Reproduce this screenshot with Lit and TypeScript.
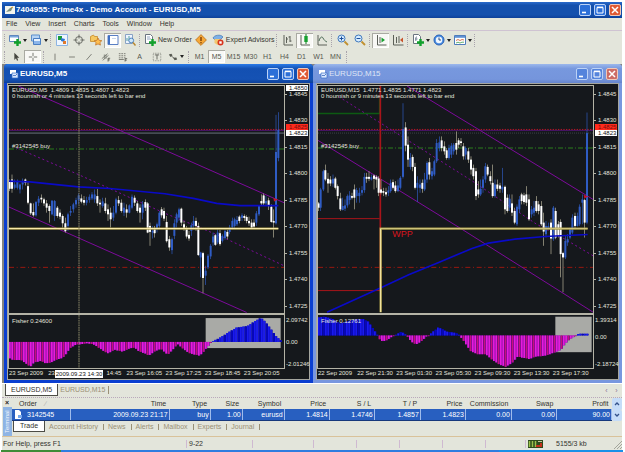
import { LitElement, html, css, svg, nothing } from "lit";
import { customElement, property } from "lit/decorators.js";
import { classMap } from "lit/directives/class-map.js";
import { styleMap } from "lit/directives/style-map.js";

type Pt = [number, number];

interface Line {
  points: string;
  kind: string;
}

interface ChartData {
  symbol: string;
  quote: string;
  countdown: string;
  order: string;
  left: number;
  candles: string;
  under: Line[];
  over: Line[];
  marker: Pt;
  highlight: [number, number, number, number];
  zero: number;
  fisher: string;
  fisherLabel: string;
  scale: [string, string, string];
  scaleGap: [number, number];
  times: string[];
  cursor?: { x: number; label: string };
  note?: string;
  topBadge?: string;
}

const PRICES = ["1.4845", "1.4830", "1.4815", "1.4800", "1.4785", "1.4770", "1.4755", "1.4740", "1.4725"];

/* Each candle: x, high, body top, body bottom, low, w(hite) or b(lue). */
const M5: ChartData = {
  symbol: "EURUSD,M5",
  quote: "EURUSD,M5  1.4809 1.4835 1.4807 1.4823",
  countdown: "0 hournish or 4 minutes 13 seconds left to bar end",
  order: "#3142545 buy",
  left: 27,
  candles: `29 300 305 328 335 w;36 285 300 328 340 w;44 300 315 325 330 b;52 300 305 325 330 b;60 312 315 330 342 b;68 297 305 315 330 b;
76 297 300 310 318 w;84 305 320 370 375 w;92 370 372 402 407 w;100 372 398 408 412 w;108 365 368 408 412 b;116 350 358 370 380 b;
124 345 355 360 370 w;132 355 360 372 380 w;140 362 372 385 400 w;148 375 380 395 430 w;156 362 364 405 408 b;164 362 365 410 425 b;
172 380 385 410 415 w;180 390 400 412 420 w;188 405 410 432 445 w;196 415 432 456 460 w;204 400 405 440 455 b;212 380 395 400 410 b;
220 370 375 390 400 b;228 355 362 375 385 b;236 342 348 362 375 b;244 345 357 367 372 w;252 350 362 370 378 w;260 352 362 370 378 b;
268 345 352 362 370 b;276 338 345 357 362 b;284 330 345 360 370 b;292 328 350 372 380 w;300 360 370 375 400 w;308 355 366 380 385 b;
316 355 372 395 402 w;324 375 390 405 425 w;332 385 400 420 445 w;340 380 400 415 425 b;348 355 360 400 405 b;356 350 362 372 380 w;
364 360 370 395 400 w;372 370 385 400 410 b;380 375 390 400 415 w;388 375 378 400 402 b;396 345 352 385 390 b;404 348 355 370 380 w;
412 365 372 395 400 w;420 375 385 400 430 w;428 365 375 400 420 b;436 360 368 385 395 w;443 368 372 460 462 w;450 430 440 458 500 w;
458 440 455 460 478 b;464 440 448 462 475 w;471 430 435 450 460 b;478 395 400 440 450 b;485 383 390 408 415 w;492 385 395 418 425 w;
500 410 428 486 490 w;508 470 480 505 515 w;516 475 480 513 525 b;523 420 432 470 480 b;530 400 405 430 445 b;537 385 390 415 425 b;
544 385 388 430 440 w;552 425 435 448 455 w;560 440 448 472 478 w;567 455 467 478 485 w;574 430 438 455 470 b;581 410 425 440 450 b;
588 415 425 440 455 w;595 430 440 528 530 w;602 518 520 535 595 b;609 518 522 597 643 w;617 560 575 590 618 b;624 525 530 565 570 b;
632 495 500 532 540 b;639 460 472 490 500 b;646 465 468 497 500 w;653 450 460 490 495 b;660 452 462 495 500 w;667 465 470 485 490 b;
675 450 455 477 482 b;682 452 458 472 480 w;689 437 445 458 465 b;697 415 425 445 450 b;704 415 420 440 447 b;711 410 422 435 440 b;
718 408 412 425 432 w;726 402 408 416 425 b;733 405 410 416 425 w;740 408 413 425 432 w;747 412 425 432 440 w;755 420 430 445 447 w;
762 420 430 442 447 w;769 395 402 430 440 b;777 378 380 405 410 b;784 345 365 372 378 w;791 342 348 372 378 w;798 350 365 372 380 b;
806 355 363 378 392 w;814 375 382 428 430 w;821 390 425 430 475 w;828 105 217 432 436 b;835 97 150 235 245 b`,
  under: [
    { points: "27,149 852,149", kind: "ask" },
    { points: "27,152 852,152", kind: "violet" },
    { points: "27,160 852,160", kind: "bid" },
    { points: "27,208 852,208", kind: "buy" },
    { points: "27,565 852,565", kind: "stop" },
    { points: "55,18 480,205 852,370", kind: "trend" },
    { points: "27,383 170,447 480,585 740,701", kind: "trend" },
    { points: "50,205 235,285 495,402 600,445 670,475 852,560", kind: "trend dotted" },
  ],
  over: [
    { points: "27,305 90,307 235,322 330,327 495,343 580,357 650,372 720,379 835,379", kind: "average" },
    { points: "27,448 835,448", kind: "pivot" },
    { points: "27,448 835,448", kind: "pivot-core" },
  ],
  marker: [827, 360],
  highlight: [617, 282, 225, 88],
  zero: 352,
  fisher: `28 400;36 405;60 405;75 415;88 425;100 412;120 408;135 415;150 412;165 405;180 400;190 395;200 380;210 368;225 360;260 356;280 360;
295 370;310 380;322 385;340 375;365 380;385 372;400 368;415 380;430 385;445 392;460 380;480 372;500 390;515 375;530 358;550 375;565 385;
595 392;605 385;615 372;625 360;632 352;640 347;660 338;680 325;705 310;740 305;760 292;780 281;795 295;810 315;825 335;840 348`,
  fisherLabel: "Fisher 0.24600",
  scale: ["2.09742", "0.00", "-2.01246"],
  scaleGap: [1, 1],
  times: ["23 Sep 2009", "23", "14:45", "23 Sep 16:05", "23 Sep 17:25", "23 Sep 18:45", "23 Sep 20:05"],
  cursor: { x: 237, label: "2009.09.23 14:30" },
  topBadge: "1.4850",
};

const M15: ChartData = {
  symbol: "EURUSD,M15",
  quote: "EURUSD,M15  1.4771 1.4835 1.4771 1.4823",
  countdown: "0 hournish or 9 minutes 13 seconds left to bar end",
  order: "#3142545 buy",
  left: 18,
  candles: `20 368 372 385 395 w;26 325 330 385 395 b;34 270 275 330 335 b;40 255 272 300 305 w;48 280 298 312 340 w;55 290 300 312 320 w;
63 285 298 312 322 b;70 292 297 325 330 w;77 315 320 350 360 w;85 340 357 390 395 w;92 355 380 392 393 b;99 360 378 388 395 b;
106 345 350 378 385 b;113 335 348 362 375 b;120 340 350 355 360 w;127 315 330 355 390 w;134 325 332 350 370 b;142 325 340 350 370 b;
150 320 332 340 348 b;157 280 292 332 340 b;164 280 292 298 310 w;171 275 292 298 305 w;178 285 293 300 303 b;186 285 288 298 330 w;
193 287 292 300 325 w;200 290 297 340 350 w;207 300 330 340 345 w;214 325 335 340 350 w;222 325 338 345 352 w;229 320 333 340 350 b;
236 300 310 335 340 b;243 300 308 325 330 w;250 305 318 335 340 w;258 300 318 335 338 b;265 290 295 325 330 b;273 70 148 292 297 b;
281 127 143 198 215 w;288 170 195 240 262 w;295 220 235 262 270 b;302 225 232 262 275 w;309 250 262 325 330 w;316 290 310 325 368 b;
324 300 315 325 340 b;331 300 310 328 340 w;338 280 300 330 335 b;345 245 250 300 310 b;352 235 248 285 300 w;360 265 275 290 300 b;
367 240 245 285 290 b;374 178 190 245 250 b;382 170 188 205 215 b;389 170 182 205 215 w;397 185 200 215 225 w;404 205 212 235 240 w;
411 195 205 235 240 b;418 190 198 225 235 b;425 190 195 215 225 b;433 155 190 210 225 w;440 175 182 195 205 w;447 175 185 190 200 w;
454 190 200 230 240 w;461 200 205 225 240 b;469 205 215 240 250 w;477 230 240 270 285 w;484 255 265 290 300 w;492 265 275 350 362 w;
499 305 330 345 355 w;506 300 328 345 350 b;513 290 300 325 340 b;520 250 260 300 310 b;527 255 262 285 290 w;535 275 290 305 315 w;
542 255 310 350 355 w;549 300 315 350 355 b;556 300 315 328 335 w;564 310 318 328 340 w;571 265 322 330 340 b;579 318 322 390 405 w;
586 345 355 395 400 w;593 345 358 385 395 b;600 345 372 400 410 w;608 385 395 430 435 w;615 375 382 435 440 b;622 350 360 390 400 b;
629 340 345 365 375 w;636 340 348 368 375 w;643 320 345 370 380 w;651 345 360 420 425 w;659 380 390 405 415 b;666 365 385 400 410 b;
673 350 365 395 400 w;680 365 375 395 405 w;688 365 380 435 440 w;695 400 430 457 500 w;702 425 440 465 475 b;709 430 440 446 450 b;
717 420 430 478 525 w;724 380 385 480 485 b;731 385 395 475 480 w;739 425 435 470 475 w;746 420 428 525 595 w;753 518 522 535 640 w;
760 470 485 535 540 b;767 465 480 490 500 b;774 445 450 475 480 b;781 405 415 460 465 b;789 400 410 440 450 w;796 400 410 440 442 b;
803 375 382 435 440 b;811 345 360 370 435 b;818 358 362 430 475 w;825 98 160 430 435 b`,
  under: [
    { points: "18,149 843,149", kind: "ask" },
    { points: "18,152 843,152", kind: "violet" },
    { points: "18,160 843,160", kind: "bid faint" },
    { points: "18,205 843,205", kind: "buy" },
    { points: "18,565 843,565", kind: "stop" },
    { points: "285,18 480,137 843,360", kind: "trend" },
    { points: "18,182 445,447 843,700", kind: "trend" },
    { points: "80,50 480,304 674,435 759,480 843,530", kind: "trend dotted" },
    { points: "18,101 203,101 203,55", kind: "green" },
    { points: "18,418 203,418", kind: "red" },
    { points: "18,635 205,635", kind: "red" },
    { points: "205,18 205,635", kind: "red wide" },
  ],
  over: [
    { points: "45,700 205,627 290,587 380,550 480,508 529,492 609,480 699,472 827,466", kind: "average" },
    { points: "206,700 206,448 827,448", kind: "pivot" },
    { points: "206,448 827,448", kind: "pivot-core dim" },
    { points: "206,700 206,448", kind: "pivot-core" },
  ],
  marker: [822, 351],
  highlight: [730, 278, 109, 104],
  zero: 333,
  fisher: `20 280;35 278;60 285;80 298;100 292;130 285;150 285;165 292;175 305;185 320;193 331;198 343;210 351;225 345;240 335;250 330;265 322;
278 331;285 338;295 352;310 359;325 350;340 336;350 331;360 322;375 310;390 315;400 322;430 326;438 331;445 340;460 360;474 380;494 388;
519 388;534 402;559 418;579 425;599 412;614 395;649 402;669 395;699 392;724 383;744 375;754 360;769 345;784 336;790 331;796 328;830 328`,
  fisherLabel: "Fisher 0.12761",
  scale: ["1.39314", "0.00", "-2.18724"],
  scaleGap: [9, 20],
  times: ["22 Sep 2009", "22 Sep 21:30", "23 Sep 01:30", "23 Sep 05:30", "23 Sep 09:30", "23 Sep 13:30", "23 Sep 17:30"],
  note: "WPP",
};

const parse = (text: string): string[][] => text.split(";").map((row) => row.trim().split(" "));

const UI_FONT = css`"Liberation Sans", Arial, sans-serif`;

const windowIcon = html`<svg class="app-icon" viewBox="0 0 10 10" aria-hidden="true">
  <path d="M1 1h6v4H1z" fill="#fff" /><path d="M3 4h6v5H3z" fill="#dce9ff" stroke="#3b71c4" stroke-width=".7" />
  <path d="M4 7l1-1 1 1 2-2" fill="none" stroke="#2458b0" stroke-width=".7" />
</svg>`;

const captionStyles = css`
  .caption-buttons { display: flex; gap: 3px; }
  .caption-buttons button {
    width: 12px; height: 12px; padding: 0; box-sizing: border-box; display: block;
    border: 1px solid #bcd2f6; border-radius: 2px; background: #2c6fd8;
  }
  .caption-buttons .close { background: #df5a34; border-color: #f0c8b8; }
  .caption-buttons svg { display: block; width: 10px; height: 10px; }
  .app-icon { width: 10px; height: 10px; flex: none; }
`;

const captionButtons = html`<span class="caption-buttons">
  <button aria-label="Minimize"><svg viewBox="0 0 10 10"><path d="M2 7.5h4" stroke="#fff" stroke-width="1.6" /></svg></button>
  <button aria-label="Maximize"><svg viewBox="0 0 10 10"><path d="M2 2.5h6v5.5H2z" fill="none" stroke="#fff" /><path d="M2 2.4h6" stroke="#fff" stroke-width="1.6" /></svg></button>
  <button class="close" aria-label="Close"><svg viewBox="0 0 10 10"><path d="M2 2l6 6M8 2l-6 6" stroke="#fff" stroke-width="1.5" /></svg></button>
</span>`;

@customElement("chart-window")
export class ChartWindow extends LitElement {
  @property({ attribute: false }) data!: ChartData;
  @property({ type: Boolean, reflect: true }) active = false;

  static styles = [
    captionStyles,
    css`
      :host {
        display: flex; flex-direction: column; flex: 1 1 0; min-width: 0; box-sizing: border-box;
        border: solid #7897df; border-width: 0 3px 3px; background: #7897df; border-radius: 4px 4px 0 0;
      }
      :host([active]) { border-color: #0b3fd0; background: #0b3fd0; }
      .title {
        display: flex; align-items: center; gap: 1px; height: 19px; flex: none; margin: 0 -3px; padding: 0 4px 0 5px;
        background: linear-gradient(#9cb8ec, #7798de 25%, #7595dc 80%, #6685cc);
        color: #dfe6f5; font: 8px/12px ${UI_FONT}; border-radius: 4px 4px 0 0;
      }
      :host([active]) .title { background: linear-gradient(#2b7be8, #1350b2 25%, #1552b4 80%, #0c3f9a); color: #fff; font-weight: bold; }
      .title h2 { flex: 1; margin: 0; font: inherit; }
      :host(:not([active])) .caption-buttons button { background: #5584dc; }
      :host(:not([active])) .caption-buttons .close { background: #cc6c66; }
      .body {
        flex: 1; display: grid; min-height: 0; padding-top: 1px; border: 1px solid #a5a69f; background: #15181c; color: #e4e4de;
        grid-template-columns: minmax(0, 1fr) 24px; grid-template-rows: minmax(0, 229fr) minmax(0, 54fr) 10px;
        font: 6px/8px ${UI_FONT};
      }
      .plot { position: relative; border: 1px solid #b4b3a6; border-bottom-width: 2px; min-height: 0; }
      .plot.lower { border-top: 0; border-bottom-width: 1px; }
      .plot svg { position: absolute; inset: 0; width: 100%; height: 100%; }
      .plot p { position: relative; margin: 0; padding-left: 3px; white-space: pre; }
      .plot .order { padding-top: 43px; }
      .plot .head { padding-top: 1px; line-height: 6px; }
      .plot .head + .head { padding-top: 0; }
      .lower p { padding-top: 2px; }
      .plot .note { position: absolute; left: 27%; top: 63%; padding: 0; color: #d8141c; font: 9px/11px ${UI_FONT}; }
      .axis { position: relative; display: flex; flex-direction: column; justify-content: space-between; padding: 5px 0; }
      .axis span { padding-left: 4px; position: relative; white-space: nowrap; }
      .axis .tick::before { content: ""; position: absolute; left: 0; top: 4px; width: 2px; height: 1px; background: #b4b3a6; }
      .axis .badge { position: absolute; left: 1px; width: 19px; padding-left: 3px; height: 6px; line-height: 6px; background: #fff; color: #111; }
      .badge.top { top: 0; }
      .axis .badge.ask { top: 17%; background: #ff2a1c; color: #7a0d0d; }
      .axis .badge.bid { top: 19.5%; }
      .axis.lower { padding: 1px 0; justify-content: flex-start; }
      .lower .space { flex: 1 1 0; padding: 0; }
      .axis.lower span { padding-left: 1px; }
      .times { position: relative; display: grid; grid-template-columns: repeat(7, minmax(0, 39fr)) minmax(0, 3fr); grid-column: 1 / 2; line-height: 9px; }
      .times span { padding-left: 1px; white-space: nowrap; }
      .times .late { text-align: right; padding-right: 4px; }
      .times .badge { position: absolute; left: 17%; top: 1px; width: 48px; padding: 0; height: 8px; line-height: 8px; text-align: center; background: #fff; color: #111; }
      .ask { stroke: #c01822; stroke-dasharray: 4 4; }
      polyline { fill: none; stroke-width: 3; }
      .violet { stroke: #4a1468; }
      .bid { stroke: #69727c; }
      .bid.faint { stroke: #3c4148; stroke-dasharray: 3 3; }
      .buy { stroke: #2a7c1c; stroke-dasharray: 15 6 3 6; }
      .stop { stroke: #98180f; stroke-dasharray: 15 8 3 8; }
      .trend { stroke: #7d0a9c; }
      .dotted { stroke-dasharray: 6 8; }
      .green { stroke: #0d5a12; stroke-width: 5; }
      .red { stroke: #a8141a; }
      .wide { stroke-width: 5; }
      .average { stroke: #0a0ac8; stroke-width: 5; }
      .pivot { stroke: #a89a4a; stroke-width: 7; }
      .pivot-core { stroke: #fff0b0; stroke-width: 3; }
      .pivot-core.dim { stroke: #d2c67c; }
      .cross { stroke: #8c8768; stroke-width: 3; stroke-dasharray: 5 2; }
      .w { fill: #fff; } .b { fill: #2f5cc4; }
      .wick.w { fill: #b9b49c; }
      .mag { fill: #e61bdc; } .mag.alt { fill: #c8107e; } .shade { fill: #6c0c9c; }
      .blue { fill: #1a1aee; } .blue.alt { fill: #0808b8; }
      .highlight { fill: #a9aaa6; }
    `,
  ];

  private candles() {
    return parse(this.data.candles).map(([x, hi, top, bottom, lo, c]) => svg`
      <rect class="wick ${c}" x=${+x - 1} y=${hi} width="2" height=${+lo - +hi}></rect>
      <rect class=${c} x=${+x - 3} y=${top} width="6" height=${Math.max(3, +bottom - +top)}></rect>`);
  }

  private histogram() {
    const { fisher, zero, left } = this.data;
    const points = parse(fisher).map(([x, y]) => [+x, +y] as Pt);
    const last = points[points.length - 1][0];
    const bars = [];
    for (let x = left, i = 0; x < last; x += 7, i++) {
      let k = 0;
      while (k < points.length - 2 && points[k + 1][0] < x) k++;
      const [x0, y0] = points[k];
      const [x1, y1] = points[k + 1];
      const t = Math.max(0, Math.min(1, (x - x0) / (x1 - x0)));
      const y = Math.round(y0 + (y1 - y0) * t);
      const up = y < zero;
      const tone = `${up ? "blue" : "mag"}${i % 3 === 2 ? " alt" : ""}`;
      const top = up ? y : zero;
      const height = Math.max(2, Math.abs(y - zero));
      bars.push(svg`<rect class=${up ? "blue alt" : "shade"} x=${x} y=${top} width="7" height=${height}></rect>
        <rect class=${tone} x=${x} y=${top} width="5" height=${height}></rect>`);
    }
    return bars;
  }

  render() {
    const d = this.data;
    const lines = (list: Line[]) => list.map((l) => svg`<polyline class=${l.kind} points=${l.points}></polyline>`);
    const [hx, hy, hw, hh] = d.highlight;
    const [mx, my] = d.marker;
    return html`
      <header class="title">${windowIcon}<h2>${d.symbol}</h2>${captionButtons}</header>
      <div class="body">
        <div class="plot">
          <svg viewBox="${d.left} 18 825 684" preserveAspectRatio="none" role="img" aria-label="${d.symbol} price">
            ${lines(d.under)} ${this.candles()} ${lines(d.over)}
            <path d="M${mx - 7} ${my - 5}l14 5-12 6z" fill="#c4142c"></path>
            ${d.cursor ? svg`<line class="cross" x1=${d.cursor.x} x2=${d.cursor.x} y1="18" y2="702"></line>` : nothing}
          </svg>
          <p class="head">${d.quote}</p>
          <p class="head">${d.countdown}</p>
          <p class="order">${d.order}</p>
          ${d.note ? html`<p class="note">${d.note}</p>` : nothing}
        </div>
        <div class="axis">
          ${PRICES.map((p) => html`<span class="tick">${p}</span>`)}
          ${d.topBadge ? html`<span class="badge top">${d.topBadge}</span>` : nothing}
          <span class="badge ask">1.4825</span>
          <span class="badge bid">1.4823</span>
        </div>
        <div class="plot lower">
          <svg viewBox="${d.left} 273 825 156" preserveAspectRatio="none" role="img" aria-label="Fisher indicator">
            <rect class="highlight" x=${hx} y=${hy} width=${hw} height=${hh}></rect>
            ${this.histogram()}
            ${d.cursor ? svg`<line class="cross" x1=${d.cursor.x} x2=${d.cursor.x} y1="273" y2="429"></line>` : nothing}
          </svg>
          <p>${d.fisherLabel}</p>
        </div>
        <div class="axis lower">
          <span>${d.scale[0]}</span>
          <span class="space" style=${styleMap({ flexGrow: String(d.scaleGap[0]) })}></span>
          <span>${d.scale[1]}</span>
          <span class="space" style=${styleMap({ flexGrow: String(d.scaleGap[1]) })}></span>
          <span>${d.scale[2]}</span>
        </div>
        <div class="times">
          ${d.times.map((t) => html`<span class=${t.length === 5 ? "late" : ""}>${t}</span>`)}
          ${d.cursor ? html`<span class="badge">${d.cursor.label}</span>` : nothing}
        </div>
      </div>`;
  }
}

const plus = svg`<path d="M8.5 5v7M5 8.5h7" stroke="#12a02c" stroke-width="2.4" />`;

const ICONS: Record<string, unknown> = {
  newChart: svg`<path d="M.5 1.5h9v6h-9z" fill="#fff" stroke="#5f86bd" /><path d="M1 2h8v1.500H1z" fill="#79a6dc" />${plus}`,
  profiles: svg`<path d="M1.500 1h8v6h-8z" fill="#b7d4f4" stroke="#5d8fcb" /><path d="M3.500 4.500h7v6h-7z" fill="#8cb6ea" stroke="#4b7fc2" /><path d="M4 5h6v2H4z" fill="#e8f3ff" />`,
  market: svg`<path d="M.5.5h11v11H.5z" fill="#eef5ff" stroke="#8db4e2" /><path d="M2 2h4v4H2z" fill="#1c9b3a" /><path d="M5 4l4 1-1 3-3-1z" fill="#2f77d0" /><path d="M7 7h3v3H7z" fill="#e07a2c" />`,
  data: svg`<circle cx="6" cy="6" r="3.500" fill="none" stroke="#6a6c66" /><path d="M6 .5v4M6 7.500v4M.5 6h4M7.500 6h4" stroke="#6a6c66" />`,
  navigator: svg`<path d="M.5 2.500l3-1.500 1 1.500h3v5h-7z" fill="#f5c860" stroke="#c68a28" stroke-width=".8" /><path d="M8 4l1.200 2.400 2.600.3-1.900 1.800.5 2.600L8 9.900l-2.400 1.200.5-2.600-1.900-1.800 2.600-.3z" fill="#ffbe50" stroke="#c2762a" stroke-width=".8" />`,
  terminal: svg`<path d="M1 1.500h10v9H1z" fill="#fff" stroke="#5a7fc4" /><path d="M1 2h2v8H1z" fill="#3d6fc4" /><path d="M5 4.500h4" stroke="#c9d6ea" />`,
  tester: svg`<path d="M1.500.5h7v9h-7z" fill="#eef4ff" stroke="#89a3c4" /><path d="M3 7V4M5 7V2M7 7V5" stroke="#56a2a0" /><circle cx="7.200" cy="6.500" r="2.400" fill="#cfe7fa" stroke="#4f82bc" /><path d="M9 8.500l2.500 3" stroke="#b8862c" stroke-width="1.400" />`,
  order: svg`<path d="M1.500.5h5l2 2v7h-7z" fill="#fff" stroke="#6b7480" /><path d="M3 3h3M3 5h4" stroke="#7c93b4" stroke-width=".8" />${plus}`,
  warning: svg`<path d="M6 .6l5.400 5.400L6 11.400.6 6z" fill="#f6a838" stroke="#b8701c" stroke-width=".8" /><path d="M6 3v4" stroke="#7a3c08" stroke-width="1.400" /><circle cx="6" cy="8.700" r=".8" fill="#7a3c08" />`,
  expert: svg`<path d="M1 4c1-3 8-4 10-1L8 6H3z" fill="#7db0e6" stroke="#3e74b4" stroke-width=".7" /><path d="M2.500 5h6v4l-3 2-3-2z" fill="#f2c870" /><circle cx="8.500" cy="8.500" r="3" fill="#d8341c" /><path d="M7.300 7.300h2.400v2.400H7.300z" fill="#fff" />`,
  bars: svg`<path d="M2 1v10h9M4.500 3v6M4.500 5H6M8 2v6M8 3H6.500M8 7h1.500" fill="none" stroke="#5c6058" />`,
  candles: svg`<path d="M2 1v10h9" fill="none" stroke="#5c6058" /><path d="M7 0v10" stroke="#0c7c1c" /><path d="M5.300 2h3.400v6H5.300z" fill="#18a030" />`,
  lineChart: svg`<path d="M2 1v10h9" fill="none" stroke="#5c6058" /><path d="M3 7c1-4 3-5 4-3s2 3 4 4" fill="none" stroke="#4d6b56" />`,
  zoomIn: svg`<circle cx="4.500" cy="4.500" r="3.500" fill="#d6ecff" stroke="#3f78bc" /><path d="M2.500 4.500h4M4.500 2.500v4" stroke="#1c4f9c" /><path d="M7.500 7.500l3.500 3.500" stroke="#c09030" stroke-width="1.800" />`,
  zoomOut: svg`<circle cx="4.500" cy="4.500" r="3.500" fill="#d6ecff" stroke="#3f78bc" /><path d="M2.500 4.500h4" stroke="#1c4f9c" /><path d="M7.500 7.500l3.500 3.500" stroke="#c09030" stroke-width="1.800" />`,
  scroll: svg`<path d="M2.500 1v10h9M5 3v6" fill="none" stroke="#5c6058" /><path d="M6.500 3.500L10 6 6.500 8.500z" fill="#18a030" />`,
  shift: svg`<path d="M1.500 1v10h10M4.500 3v6M7 2v7" fill="none" stroke="#5c6058" /><path d="M11 3.500L8 6l3 2.500z" fill="#c8542c" />`,
  indicators: svg`<path d="M1.500.5h5l2 2v7h-7z" fill="#fff" stroke="#6b7480" /><path d="M5 3c-1.500-.5-1 1-1.200 4M3 5h2.500" fill="none" stroke="#53657c" stroke-width=".8" />${plus}`,
  periods: svg`<circle cx="6" cy="6" r="5" fill="#4c8fe4" stroke="#2760b4" /><circle cx="6" cy="6" r="3.200" fill="#eef6ff" /><path d="M6 3.500V6h2" fill="none" stroke="#2c4c7c" />`,
  templates: svg`<path d="M.5 1.500h11v9H.5z" fill="#fff" stroke="#4f7cba" /><path d="M1 2h10v1.800H1z" fill="#5e90d4" /><path d="M2 6.500l2-1 2 1 2-1 2 .5" fill="none" stroke="#c8502c" stroke-width=".8" /><path d="M2 9l2-.8 2 .8 2-.8h2" fill="none" stroke="#3d9a50" stroke-width=".8" />`,
  cursor: svg`<path d="M4 1v8.500l2-2 1.200 3 1.400-.6L7.400 7H10z" fill="#45463f" />`,
  crosshair: svg`<path d="M6 1v4M6 7v4M1 6h4M7 6h4" stroke="#5c5e58" />`,
  vertical: svg`<path d="M6 2v8" stroke="#6c6e66" />`,
  horizontal: svg`<path d="M2.500 6h7" stroke="#6c6e66" />`,
  trend: svg`<path d="M3 9.500l6-7" stroke="#6c6e66" />`,
  channel: svg`<path d="M1 8l7-6M2 10l7-6M4 3v5M6 3v5" stroke="#6c6e66" stroke-width=".9" /><path d="M8.500 11.500v-4H11M8.500 9.500h2" fill="none" stroke="#44463f" stroke-width=".9" />`,
  fibo: svg`<path d="M1 2h9M1 4.500h9M1 7h9" stroke="#6c6e66" stroke-dasharray="2 1" /><path d="M1 9h6" stroke="#6c6e66" /><path d="M8.500 11.500V8H11M8.500 9.800h2" fill="none" stroke="#44463f" stroke-width=".9" />`,
  label: svg`<path d="M1.500 1.500h9v9h-9z" fill="none" stroke="#7c7e76" stroke-dasharray="1 1" /><path d="M3.500 3.500h5M6 3.500v5.500" stroke="#55574f" />`,
  arrows: svg`<path d="M1 3l3-1 1.500 2L3 6zM6 7l2 3 3-1-1-2.500z" fill="#55574f" /><path d="M4 5l3 2" stroke="#55574f" />`,
};

const icon = (name: string) => svg`<svg class="icon" viewBox="0 0 12 12" aria-hidden="true">${ICONS[name]}</svg>`;

interface Tool { id: string; name: string; text?: string; menu?: boolean; on?: boolean; }
const t = (id: string, name: string, extra: Partial<Tool> = {}): Tool => ({ id, name, ...extra });

const MAIN_TOOLS: Tool[][] = [
  [t("newChart", "New chart", { menu: true }), t("profiles", "Profiles", { menu: true })],
  [t("market", "Market watch"), t("data", "Data window"), t("navigator", "Navigator"), t("terminal", "Terminal", { on: true }), t("tester", "Strategy tester")],
  [t("order", "New Order", { text: "New Order" }), t("warning", "MetaEditor"), t("expert", "Expert Advisors", { text: "Expert Advisors" })],
  [t("bars", "Bar chart"), t("candles", "Candlesticks", { on: true }), t("lineChart", "Line chart")],
  [t("zoomIn", "Zoom in"), t("zoomOut", "Zoom out")],
  [t("scroll", "Auto scroll", { on: true }), t("shift", "Chart shift")],
  [t("indicators", "Indicators", { menu: true }), t("periods", "Periods", { menu: true }), t("templates", "Templates", { menu: true })],
];

const LINE_TOOLS: Tool[][] = [
  [t("cursor", "Cursor"), t("crosshair", "Crosshair", { on: true })],
  [t("vertical", "Vertical line"), t("horizontal", "Horizontal line"), t("trend", "Trendline"), t("channel", "Channel"), t("fibo", "Fibonacci"), t("", "Text", { text: "A" }), t("label", "Text label"), t("arrows", "Arrows", { menu: true })],
  ["M1", "M5", "M15", "M30", "H1", "H4", "D1", "W1", "MN"].map((p) => t("", p, { text: p, on: p === "M5" })),
];

/* Heading, value, share of the table width. */
const COLUMNS: [string, string, number][] = [
  ["Order", "3142545", 58], ["Time", "2009.09.23 21:17", 99], ["Type", "buy", 41], ["Size", "1.00", 32],
  ["Symbol", "eurusd", 42], ["Price", "1.4814", 45], ["S / L", "1.4746", 45], ["T / P", "1.4857", 46],
  ["Price", "1.4823", 45], ["Commission", "0.00", 46], ["Swap", "0.00", 45], ["Profit", "90.00", 55],
];
const TOTAL = COLUMNS.reduce((sum, c) => sum + c[2], 0);

@customElement("app-root")
export class AppRoot extends LitElement {
  static styles = [
    captionStyles,
    css`
      :host {
        display: flex; flex-direction: column; box-sizing: border-box; min-height: 100vh; padding: 2px 3px 0 2px;
        background: #fff; color: #33332e; font: 7px/8px ${UI_FONT};
      }
      button { font: inherit; color: inherit; border: 0; padding: 0; background: none; }
      .titlebar { display: flex; align-items: center; gap: 1px; height: 16px; padding: 0 1px 0 3px; background: linear-gradient(#2a6bcc, #1450ad 20%, #1450ad 80%, #0d4099); color: #fff; }
      .titlebar h1 { flex: 1; margin: 0; font: bold 8px/12px ${UI_FONT}; }
      .chrome { background: #e3e5db; }
      .menu { display: flex; gap: 8px; height: 12px; padding: 0 4px; border-bottom: 1px solid #cfc3d2; align-items: center; }
      .tools { display: flex; align-items: center; height: 18px; padding-left: 2px; }
      .tools.slim { height: 15px; }
      .group { display: flex; align-items: center; padding: 0 1px 0 2px; border-left: 1px dotted #a9a3ac; height: 13px; }
      .slim .group { height: 12px; padding: 0 2px; }
      .tool { display: flex; align-items: center; justify-content: center; min-width: 17px; height: 15px; gap: 2px; box-sizing: border-box; }
      .slim .tool { height: 13px; color: #55574f; }
      .tool.worded { padding: 0 1px 0 2px; }
      .tool.on { background: #f8f8f5; box-shadow: inset 1px 1px #a9aaa2, inset -1px -1px #fff; }
      .tool.menu-tool { min-width: 21px; }
      .menu-tool::after { content: ""; border: 2px solid transparent; border-top: 3px solid #222; border-bottom: 0; }
      .icon { width: 12px; height: 12px; flex: none; }
      .slim .icon { width: 10px; height: 10px; }
      .workspace { display: flex; flex: 1; min-height: 319px; padding-left: 2px; background: #858580; border-bottom: 1px solid #fff; }
      .sheets { display: flex; align-items: stretch; height: 13px; padding-left: 3px; color: #9a9076; }
      .sheets button { padding: 0 5px; margin-bottom: 1px; }
      .sheets .current { background: #fff; color: #33332e; border: solid #4c4c46; border-width: 0 1px 1px; }
      .sheets .next { padding: 0 3px 0 2px; border-right: 1px solid #9a9076; margin: 2px 0 3px; }
      .arrows { margin-left: auto; display: flex; gap: 5px; padding-right: 3px; }
      .sheets .arrows button { padding: 0; margin: 0; width: 5px; color: #8d6f95; }
      .terminal { display: flex; border-top: 1px dotted #b9a9bb; border-bottom: 1px solid #d9c29a; height: 38px; }
      .side { width: 10px; display: flex; flex-direction: column; align-items: center; }
      .side button { height: 9px; line-height: 9px; font-weight: bold; color: #222; }
      .side span { flex: 1; width: 9px; writing-mode: vertical-rl; transform: rotate(180deg); line-height: 9px; background: #8eb4e4; color: #f4f8ff; font-size: 6px; text-align: center; }
      .content { flex: 1; min-width: 0; }
      .grid-row { display: flex; }
      table { flex: 1; min-width: 0; border-collapse: collapse; table-layout: fixed; }
      th, td { padding: 0 3px; text-align: right; font-weight: normal; white-space: nowrap; }
      th { height: 11px; }
      th:first-child, td:first-child { text-align: left; padding-left: 7px; }
      td { height: 11px; background: #285fc0; color: #fff; border-right: 1px solid #9fbcec; border-bottom: 1px solid #17387c; padding: 0 1px; }
      td:first-child { padding-left: 2px; }
      .cell { display: flex; align-items: center; gap: 5px; }
      .cell svg { width: 8px; height: 9px; }
      .sort { padding-left: 8px; color: #aaa; }
      .scroll { width: 10px; display: flex; flex-direction: column; }
      .scroll button { flex: 1; background: #c5dcf8; border-radius: 2px; display: grid; place-items: center; }
      .scroll svg { width: 6px; height: 5px; }
      .tabs { display: flex; height: 12px; align-items: center; color: #9a9076; }
      .tabs button { padding: 0 5px 0 4px; border-right: 1px solid #9a9076; line-height: 6px; }
      .tabs .current { background: #fff; color: #33332e; border: solid #4c4c46; border-width: 0 1px 1px; height: 11px; margin-left: 1px; padding: 0 6px; align-self: start; }
      .status {
        display: grid; height: 13px; align-items: center; padding-top: 1px; box-sizing: border-box;
        grid-template-columns: minmax(0, 184fr) minmax(0, 66fr) minmax(0, 61fr) repeat(4, minmax(0, 43fr)) minmax(0, 40fr) minmax(0, 97fr);
      }
      .status > span { border-left: 1px solid #cfb9d1; height: 8px; padding-left: 2px; white-space: nowrap; }
      .status .help { border: 0; padding-left: 1px; }
      .status .traffic { display: flex; align-items: center; gap: 13px; }
      .traffic svg { width: 15px; height: 8px; }
      .traffic .grip { width: 9px; height: 9px; margin-left: auto; }
      .taskbar { height: 2px; margin: 0 -1px; background: linear-gradient(90deg, #3f8c38 0 60px, #2f7de0 60px 80%, #1a90e8 80%); }
    `,
  ];

  private tool(tool: Tool) {
    const cls = classMap({ tool: true, on: !!tool.on, worded: !!tool.text && !!tool.id, "menu-tool": !!tool.menu });
    return html`<button class=${cls} aria-label=${tool.name}>${tool.id ? icon(tool.id) : nothing}${tool.text ?? nothing}</button>`;
  }

  private toolbar(groups: Tool[][], slim = false) {
    return html`<div class=${classMap({ tools: true, chrome: true, slim })} role="toolbar">
      ${groups.map((g) => html`<div class="group">${g.map((x) => this.tool(x))}</div>`)}<div class="group"></div>
    </div>`;
  }

  render() {
    return html`
      <header class="titlebar">
        <svg class="app-icon" viewBox="0 0 10 10" aria-hidden="true"><path d="M0 1h10v8H0z" fill="#f4f5ee" /><path d="M1 7l4-4 3-1-2 4z" fill="#7b8f7c" /><path d="M6 3l2-1" stroke="#d69a28" /></svg>
        <h1>7404955: Prime4x - Demo Account - EURUSD,M5</h1>
        ${captionButtons}
      </header>
      <nav class="menu chrome">
        ${["File", "View", "Insert", "Charts", "Tools", "Window", "Help"].map((m) => html`<button>${m}</button>`)}
      </nav>
      ${this.toolbar(MAIN_TOOLS)} ${this.toolbar(LINE_TOOLS, true)}
      <main class="workspace">
        <chart-window active .data=${M5}></chart-window>
        <chart-window .data=${M15}></chart-window>
      </main>
      <div class="sheets chrome">
        <button class="current">EURUSD,M5</button><button class="next">EURUSD,M15</button>
        <span class="arrows"><button aria-label="Previous chart">‹</button><button aria-label="Next chart">›</button></span>
      </div>
      <section class="terminal chrome">
        <div class="side"><button aria-label="Close terminal">×</button><span>Terminal</span></div>
        <div class="content">
          <div class="grid-row">
            <table>
              <colgroup>${COLUMNS.map((c) => html`<col style=${styleMap({ width: `${(c[2] / TOTAL) * 100}%` })} />`)}</colgroup>
              <thead><tr>${COLUMNS.map((c, i) => html`<th scope="col">${c[0]}${i === 0 ? html`<span class="sort">∕</span>` : nothing}</th>`)}</tr></thead>
              <tbody><tr>${COLUMNS.map((c, i) => html`<td>${i === 0
                ? html`<span class="cell"><svg viewBox="0 0 8 9" aria-hidden="true"><path d="M1 0h4l2 2v7H1z" fill="#fff" /><path d="M4 5h4v3H4z" fill="#77a8ea" /></svg>${c[1]}</span>`
                : c[1]}</td>`)}</tr></tbody>
            </table>
            <div class="scroll">
              <button aria-label="Scroll up"><svg viewBox="0 0 6 5"><path d="M1 4l2-2 2 2" fill="none" stroke="#33528c" stroke-width="1.300" /></svg></button>
              <button aria-label="Scroll down"><svg viewBox="0 0 6 5"><path d="M1 1l2 2 2-2" fill="none" stroke="#33528c" stroke-width="1.300" /></svg></button>
            </div>
          </div>
          <div class="tabs">
            ${["Trade", "Account History", "News", "Alerts", "Mailbox", "Experts", "Journal"].map((n, i) => html`<button class=${i === 0 ? "current" : ""}>${n}</button>`)}
          </div>
        </div>
      </section>
      <footer class="status chrome">
        <span class="help">For Help, press F1</span><span>9-22</span><span></span>
        <span></span><span></span><span></span><span></span><span></span>
        <span class="traffic">
          <svg viewBox="0 0 15 8" aria-hidden="true"><path d="M0 0h15v8H0z" fill="#2d4a1c" /><path d="M1.500 1v6M4.500 1v6M7.500 1v6" stroke="#9cc04c" stroke-width="1.500" /><path d="M8 7h6V3h-2v2H8z" fill="#c4301c" /><path d="M10 1.500h4" stroke="#c8c49c" /></svg>
          5155/3 kb
          <svg class="grip" viewBox="0 0 9 9" aria-hidden="true"><path d="M1 9l8-8M4 9l5-5M7 9l2-2" stroke="#a3a59b" /></svg>
        </span>
      </footer>
      <div class="taskbar"></div>`;
  }
}
